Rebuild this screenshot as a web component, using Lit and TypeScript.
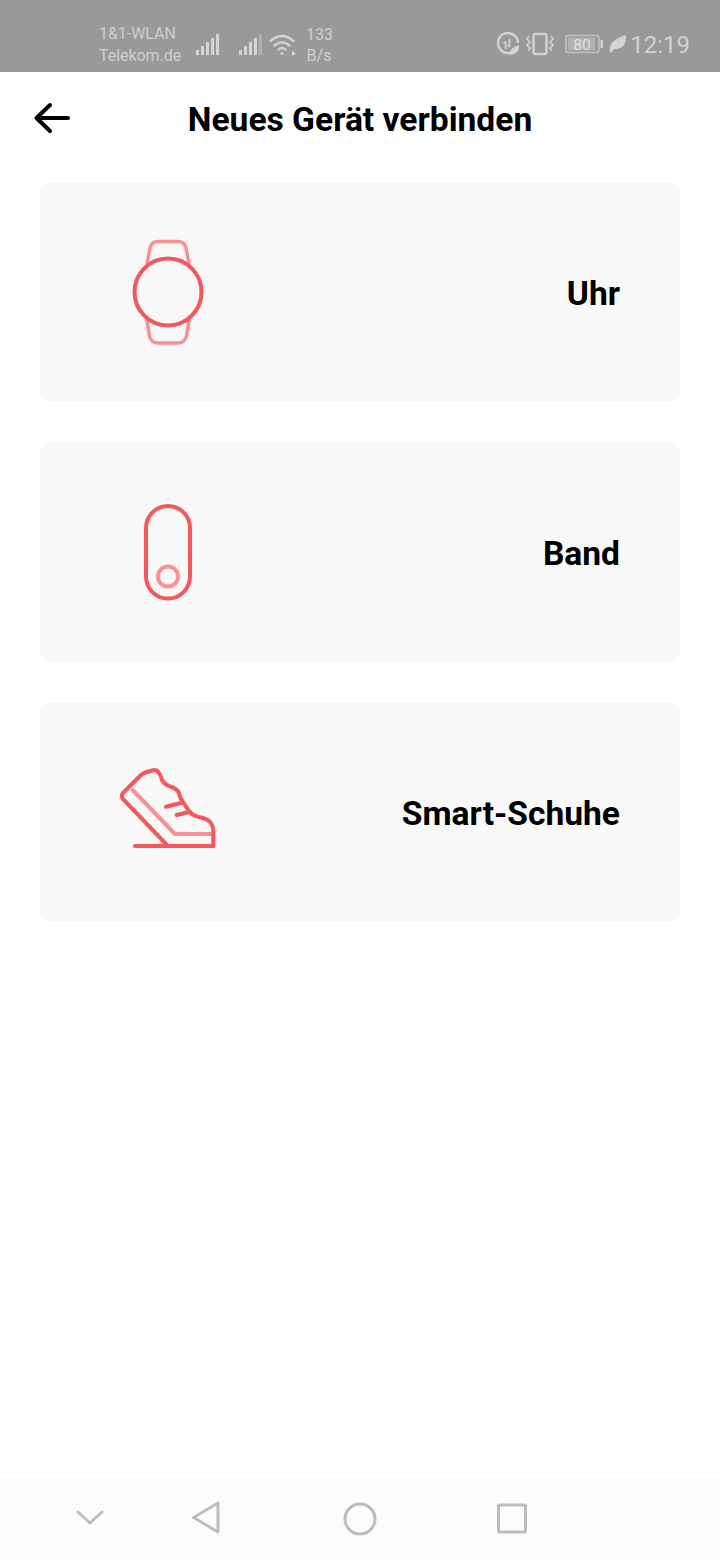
import { LitElement, html, css, svg } from "lit";
import { customElement } from "lit/decorators.js";

const RED = "#f4585c";
const PINK = "#f99093";

const watch = html`<svg class="icon" viewBox="0 0 96 110" fill="none">
  <path d="M26.500 29 L30 11 Q31.500 4.500 38 4.500 H58 Q64.500 4.500 66 11 L69.500 29" stroke=${PINK} stroke-width="3.500"/>
  <path d="M26.500 81 L29.500 99 Q31 106 38 106 H58 Q65 106 66.500 99 L69.500 81" stroke=${PINK} stroke-width="3.500"/>
  <circle cx="48" cy="55" r="33.500" stroke=${RED} stroke-width="4"/>
</svg>`;

const band = html`<svg class="icon" viewBox="0 0 96 110" fill="none">
  <rect x="26" y="9" width="44" height="92.500" rx="22" stroke=${RED} stroke-width="4"/>
  <circle cx="48" cy="79.500" r="10" stroke=${PINK} stroke-width="4"/>
</svg>`;

const shoe = html`<svg class="icon" viewBox="0 0 96 110" fill="none" stroke-linecap="round" stroke-linejoin="round">
  <path d="M12.700 33 L55 77 H93.300" stroke=${PINK} stroke-width="4"/>
  <path d="M46 87 L3 42 Q0.500 38.500 3.500 35.500 L21 18 Q24 15.500 32 13.500 Q37 12 39 16 Q41 19 42 23 Q44 27 50 29.500 Q57 31.500 59 36 Q60 41 63 45 L69 54 Q72 58 77 59.500 L83 61 Q93.500 64 93.300 74 V89 M15 89 H93.300" stroke=${RED} stroke-width="4"/>
  <path d="M46 49.700 L61.700 45.700 M56.700 58 L70 54.700" stroke=${RED} stroke-width="4"/>
</svg>`;

const bars = (last: string) => svg`
  <rect x="0" y="17" width="3" height="5" fill="#d4d4d4"/>
  <rect x="5" y="13" width="3" height="9" fill="#d4d4d4"/>
  <rect x="10" y="9" width="3" height="13" fill="#d4d4d4"/>
  <rect x="15" y="5" width="3" height="17" fill="#d4d4d4"/>
  <rect x="20" y="1" width="3" height="21" fill=${last}/>`;

@customElement("app-root")
export class AppRoot extends LitElement {
  static styles = css`
    :host { display: flex; flex-direction: column; width: 720px; height: 1560px; background: #fff;
      font-family: Roboto, "Liberation Sans", sans-serif; color: #000; }
    .status { height: 72px; background: #999; color: #cfcfcf; display: flex; align-items: center;
      padding: 18px 30px 0 99px; box-sizing: border-box; font-size: 16px; }
    .carrier { line-height: 22px; width: 97px; white-space: nowrap; letter-spacing: -0.05px; }
    .bars { width: 23px; height: 22px; display: block; margin-top: -2px; }
    .bars.b2 { margin-left: 20px; }
    .wifi { width: 28px; height: 24px; margin-left: 7px; display: block; margin-top: -2px; }
    .speed { line-height: 21px; margin-left: 9px; text-align: center; width: 26px; }
    .spacer { flex: 1; }
    .rt { display: block; margin-top: -2px; }
    .data { width: 24px; height: 24px; }
    .vib { width: 28px; height: 24px; margin-left: 6px; }
    .batt { width: 38px; height: 20px; margin-left: 11px; }
    .leaf { width: 18px; height: 20px; margin-left: 6px; }
    .time { font-size: 24px; margin-left: 3px; color: #d2d2d2; }

    .header { position: relative; height: 94px; display: flex; align-items: center; justify-content: center; }
    .title { font-size: 33.600px; font-weight: 700; margin: 2px 0 0; line-height: 1; }
    .back { position: absolute; left: 32px; top: 28px; width: 40px; height: 36px; display: block; }

    .list { display: flex; flex-direction: column; gap: 40px; padding: 16px 40px 0; flex: 1; }
    .card { height: 220px; border-radius: 12px; background: #f8f8f8; display: flex; align-items: center;
      justify-content: space-between; padding: 0 60px 0 80px; box-sizing: border-box; }
    .icon { width: 96px; height: 110px; display: block; }
    .label { font-size: 33.600px; font-weight: 700; line-height: 1; margin-top: 4px; }

    .nav { height: 82px; background: #fcfcfc; display: block; width: 720px; }
  `;

  render() {
    return html`
      <div class="status">
        <div class="carrier">1&amp;1-WLAN<br />Telekom.de</div>
        <svg class="bars b1" viewBox="0 0 23 22">${bars("#d4d4d4")}</svg>
        <svg class="bars b2" viewBox="0 0 23 22">${bars("#b0b0b0")}</svg>
        <svg class="wifi" viewBox="0 0 28 24" fill="none" stroke="#d4d4d4" stroke-width="2.400" stroke-linecap="round">
          <path d="M1.500 9 Q13 -1 24.500 9"/><path d="M5.500 13.500 Q13 7 20.500 13.500"/><path d="M9.500 17.500 Q13 14.500 16.500 17.500"/>
          <circle cx="13" cy="21.500" r="1.600" fill="#d4d4d4" stroke="none"/>
          <path d="M23 19 L27 21.500 L23 24 Z" fill="#d4d4d4" stroke="none"/>
        </svg>
        <div class="speed">133<br />B/s</div>
        <div class="spacer"></div>
        <svg class="rt data" viewBox="0 0 24 24" fill="none" stroke="#d4d4d4">
          <path d="M20 17 A10 10 0 1 1 22 11" stroke-width="2.400"/>
          <text x="6" y="16.500" font-size="11" font-weight="700" fill="#d4d4d4" stroke="none" font-family="Roboto, sans-serif">1</text>
          <path d="M13.500 7 V15 M13.500 15 L11.500 13" stroke-width="1.600"/>
          <path d="M14 23 Q14 15 23 13 Q24 22 14 23 Z" fill="#d4d4d4" stroke="none"/>
        </svg>
        <svg class="rt vib" viewBox="0 0 28 24" fill="none" stroke="#d4d4d4" stroke-width="2">
          <rect x="7.500" y="2" width="13" height="20" rx="2" stroke-width="2.400"/>
          <path d="M3 4 L1 7 L4 10 L1 13 L4 16 L2 19" stroke-width="1.600"/>
          <path d="M25 4 L27 7 L24 10 L27 13 L24 16 L26 19" stroke-width="1.600"/>
        </svg>
        <svg class="rt batt" viewBox="0 0 38 20" fill="none">
          <rect x="1" y="1.500" width="33" height="17" rx="2.500" stroke="#c2c2c2" stroke-width="1.600"/>
          <rect x="3" y="3.500" width="27" height="13" fill="#b2b2b2"/>
          <rect x="35.500" y="6" width="2.500" height="8" fill="#d4d4d4"/>
          <text x="17" y="15.500" text-anchor="middle" font-size="15.500" fill="#e2e2e2" font-family="Roboto, sans-serif">80</text>
        </svg>
        <svg class="rt leaf" viewBox="0 0 18 20"><path d="M1 18 Q-1 6 17 1 Q18 15 5 15 L2 19 Z" fill="#d4d4d4"/></svg>
        <span class="time">12:19</span>
      </div>

      <div class="header">
        <svg class="back" viewBox="0 0 40 36" fill="none" stroke="#000" stroke-width="4" stroke-linecap="round" stroke-linejoin="round">
          <path d="M36 18 H5 M18 5 L4.500 18 L18 31"/>
        </svg>
        <h1 class="title">Neues Gerät verbinden</h1>
      </div>

      <div class="list">
        <div class="card">${watch}<span class="label">Uhr</span></div>
        <div class="card">${band}<span class="label">Band</span></div>
        <div class="card">${shoe}<span class="label">Smart-Schuhe</span></div>
      </div>

      <svg class="nav" viewBox="0 0 720 82" fill="none" stroke="#bdbdbd" stroke-width="3" stroke-linejoin="round" stroke-linecap="round">
        <path d="M78 34 L90 45 L102 34"/>
        <path d="M218 25 V54 L193.500 39.500 Z"/>
        <circle cx="360" cy="41" r="15"/>
        <rect x="498.500" y="27" width="27" height="27" rx="1"/>
      </svg>
    `;
  }
}
